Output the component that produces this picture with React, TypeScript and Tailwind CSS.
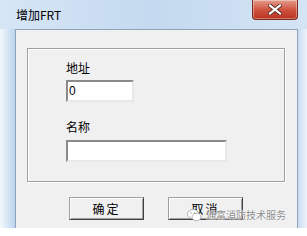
export default function App() {
  const font = { fontFamily: '"Noto Sans CJK SC", "Liberation Sans", sans-serif' };
  return (
    <div
      className="w-[307px] h-[236px] flex flex-col bg-white overflow-hidden"
      style={font}
    >
      {/* glass frame */}
      <div className="h-[228px] flex flex-col bg-gradient-to-r from-[#d6e6f6] via-[#c4d9ef] to-[#d4e4f4]">
        {/* title bar */}
        <div className="h-[29px] flex items-start">
          <div className="pl-[16px] pt-[7px] text-[12px] leading-[16px] text-black">增加FRT</div>
          <div className="flex-1" />
          <div className="mr-[9px] w-[46px] h-[20px] rounded-b-[4px] border border-t-0 border-[#7a2a1e] bg-gradient-to-b from-[#e49c8e] via-[#cf5440] to-[#b8321e] shadow-[inset_0_0_0_1px_rgba(255,255,255,0.35)] flex items-center justify-center">
            <svg width="14" height="11" viewBox="0 0 14 11">
              <path
                d="M2 1.5 L12 9.5 M12 1.5 L2 9.5"
                stroke="#5a2a22"
                strokeWidth="4"
                strokeLinecap="square"
              />
              <path
                d="M2 1.5 L12 9.5 M12 1.5 L2 9.5"
                stroke="#ffffff"
                strokeWidth="2.2"
                strokeLinecap="square"
              />
            </svg>
          </div>
        </div>
        {/* client area */}
        <div className="flex-1 flex">
          <div className="w-[15px] bg-gradient-to-r from-[#f4f8fc] to-[#bcd4ee]" />
          <div className="w-[283px] bg-[#f0f0f0] border border-[#8fa3bb] border-b-0 flex flex-col">
            <div className="mt-[18px] ml-[11px] mr-[12px] h-[134px] border border-[#a0a0a0] shadow-[inset_1px_1px_0_#ffffff,1px_1px_0_#ffffff] flex flex-col pl-[38px] pt-[11px]">
              <div className="text-[12px] leading-[16px] text-black">地址</div>
              <div className="mt-[4px] w-[68px] h-[22px] bg-white border-2 border-t-[#8a8a8a] border-l-[#8a8a8a] border-r-[#e8e8e8] border-b-[#e8e8e8] text-[12px] leading-[16px] pl-[1px] pt-[1px]" style={{ fontFamily: '"Liberation Sans", sans-serif' }}>
                0
              </div>
              <div className="mt-[17px] text-[12px] leading-[16px] text-black">名称</div>
              <div className="mt-[5px] w-[161px] h-[22px] bg-white border-2 border-t-[#8a8a8a] border-l-[#8a8a8a] border-r-[#e8e8e8] border-b-[#e8e8e8]" />
            </div>
            <div className="relative mt-[15px] ml-[53px] flex gap-[24px]">
              <div className="w-[75px] h-[23px] bg-[#f0f0f0] border border-[#a0a0a0] border-r-[#404040] border-b-[#404040] shadow-[inset_1px_1px_0_#ffffff,inset_-1px_-1px_0_#a0a0a0] flex items-center justify-center text-[12px] tracking-[2px] text-black">
                确定
              </div>
              <div className="w-[75px] h-[23px] bg-[#f0f0f0] border border-[#a0a0a0] border-r-[#404040] border-b-[#404040] shadow-[inset_1px_1px_0_#ffffff,inset_-1px_-1px_0_#a0a0a0] flex items-center justify-center text-[12px] tracking-[2px] text-black">
                取消
              </div>
              {/* watermark */}
              <div className="absolute left-[118px] top-[11px] flex items-center gap-[4px] whitespace-nowrap">
                <svg width="15" height="14" viewBox="0 0 15 14">
                  <ellipse cx="6" cy="6" rx="5.5" ry="4.5" fill="#ffffff" stroke="#b0b0b0" strokeWidth="1" />
                  <ellipse cx="9.5" cy="9" rx="4.5" ry="3.8" fill="#ffffff" stroke="#b0b0b0" strokeWidth="1" />
                  <circle cx="4" cy="5" r="0.8" fill="#9a9a9a" />
                  <circle cx="7.5" cy="5" r="0.8" fill="#9a9a9a" />
                </svg>
                <span className="text-[10px] leading-[12px] text-[#8c8c8c] [text-shadow:0_0_1px_#fff,0_0_2px_#fff]">
                  通富消防技术服务
                </span>
              </div>
            </div>
          </div>
          <div className="flex-1 bg-gradient-to-r from-[#c8dcf0] to-[#eef4fa]" />
        </div>
      </div>
      <div className="flex-1 bg-white" />
    </div>
  );
}
